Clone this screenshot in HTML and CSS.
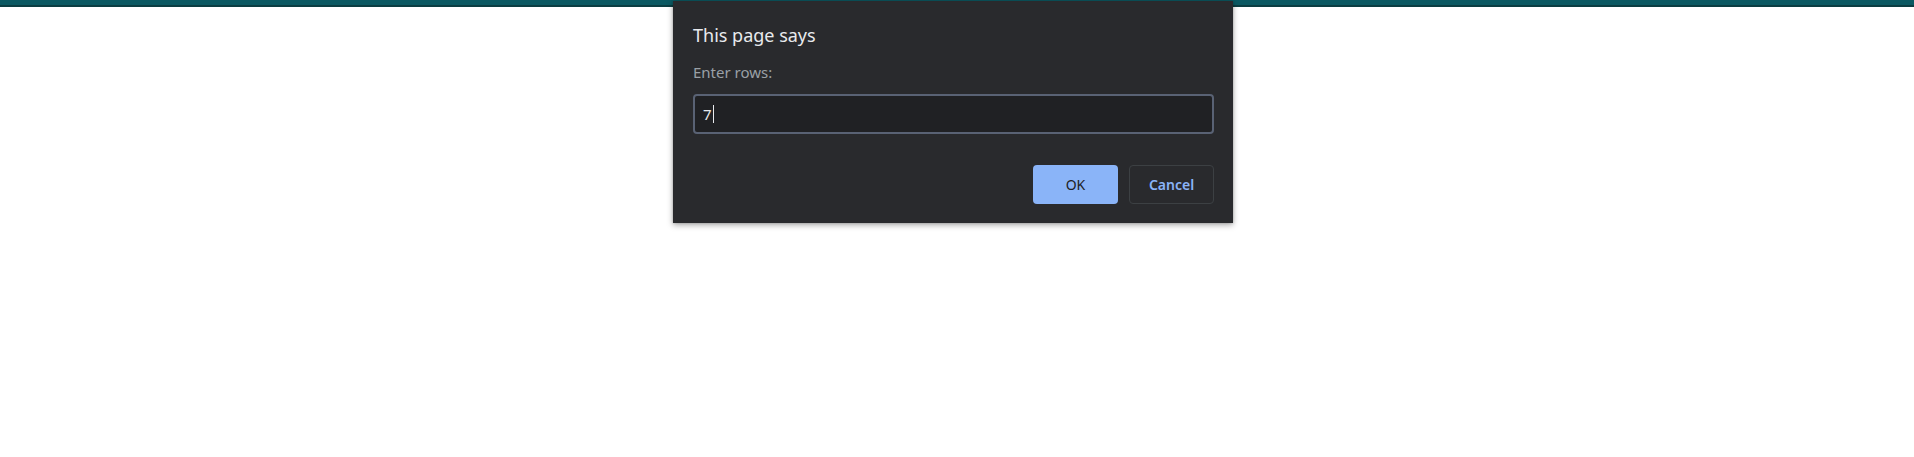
FILE: index.html
```html
<!DOCTYPE html>
<html>
<head>
<meta charset="utf-8">
<link rel="stylesheet" href="styles.css">
</head>
<body>
<div class="topbar"></div>
<div class="overlay">
  <div class="dialog">
    <div class="title">This page says</div>
    <div class="label">Enter rows:</div>
    <div class="input"><span class="val">7</span><span class="caret"></span></div>
    <div class="actions">
      <button class="btn ok">OK</button>
      <button class="btn cancel">Cancel</button>
    </div>
  </div>
</div>
</body>
</html>
```
FILE: styles.css
```css
html, body {
  margin: 0;
  padding: 0;
  background: #ffffff;
  height: 457px;
  overflow: hidden;
  font-family: "Segoe UI", "Noto Sans", "Open Sans", sans-serif;
}
.topbar {
  height: 5px;
  background: #0b5962;
  border-bottom: 2px solid #0b3e42;
}
.overlay {
  position: absolute;
  top: 1px;
  left: 673px;
}
.dialog {
  width: 560px;
  height: 222px;
  box-sizing: border-box;
  background: #292a2d;
  padding: 22px 19px 0 20px;
  box-shadow: 0 2px 6px rgba(0,0,0,0.35), 0 0 2px rgba(0,0,0,0.2);
  display: flex;
  flex-direction: column;
}
.title {
  color: #e8eaed;
  font-size: 18px;
  line-height: 24px;
}
.label {
  margin-top: 14px;
  color: #9aa0a6;
  font-size: 15px;
  line-height: 22px;
}
.input {
  margin-top: 11px;
  height: 40px;
  box-sizing: border-box;
  border: 2px solid #596274;
  border-radius: 4px;
  background: #202124;
  display: flex;
  align-items: center;
  padding-left: 8px;
  color: #e8eaed;
  font-size: 15px;
}
.caret {
  width: 1px;
  height: 18px;
  background: #e8eaed;
  margin-left: 1px;
}
.actions {
  margin-top: 31px;
  display: flex;
  justify-content: flex-end;
  gap: 11px;
}
.btn {
  height: 39px;
  border-radius: 4px;
  font-family: inherit;
  font-size: 14px;
  padding: 0;
}
.ok {
  width: 85px;
  background: #8ab4f8;
  border: none;
  color: #202124;
}
.cancel {
  width: 85px;
  background: transparent;
  border: 1px solid #3c4043;
  color: #8ab4f8;
  font-weight: 600;
}
```
